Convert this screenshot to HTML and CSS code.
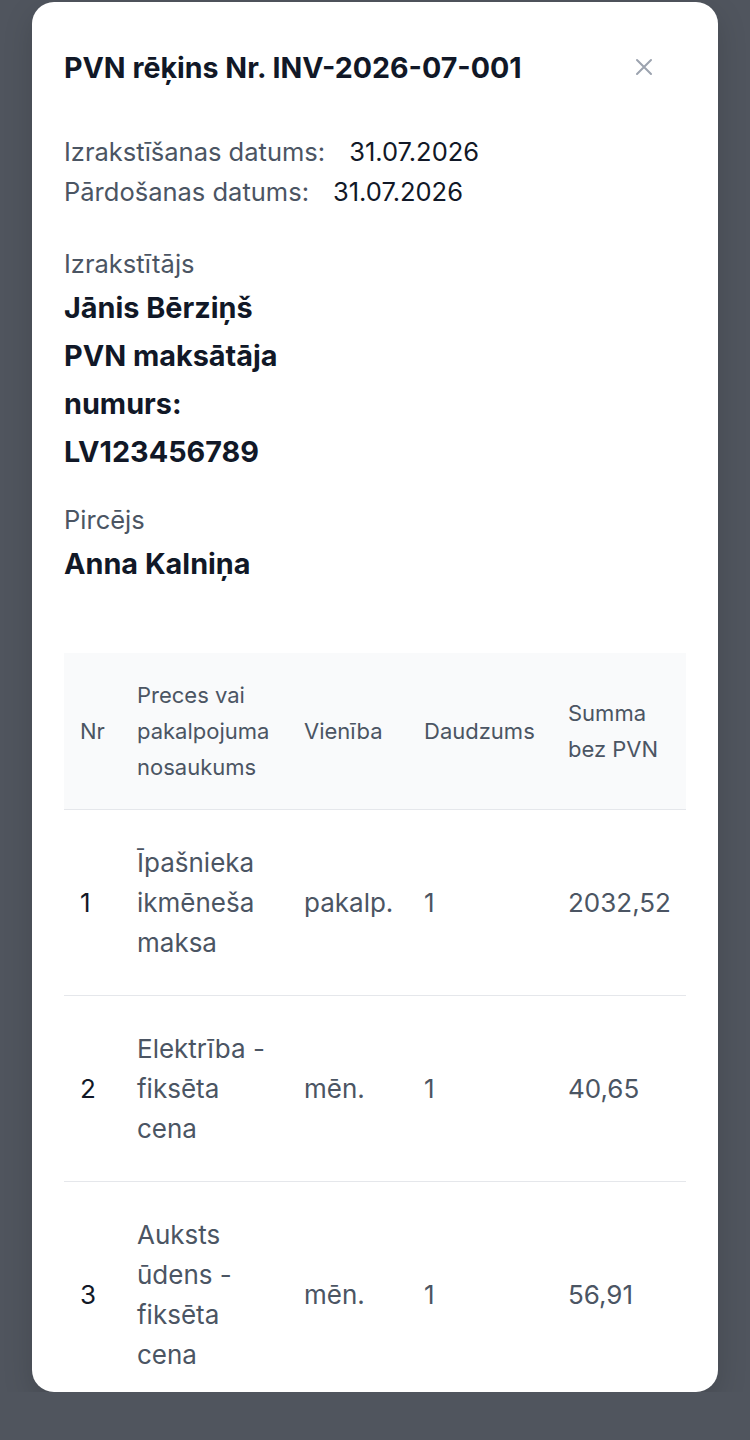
FILE: index.html
```html
<!DOCTYPE html>
<html lang="lv">
<head>
<meta charset="utf-8">
<title>PVN rēķins</title>
<link rel="stylesheet" href="styles.css">
</head>
<body>
<div class="modal">
  <div class="modal-header">
    <h1 class="title">PVN rēķins Nr. INV-2026-07-001</h1>
    <button class="close" aria-label="Aizvērt">
      <svg width="18" height="18" viewBox="0 0 18 18"><path d="M2 2L16 16M16 2L2 16" stroke="#9ca3af" stroke-width="2" stroke-linecap="round"/></svg>
    </button>
  </div>
  <div class="dates">
    <div class="date-row"><span class="label">Izrakstīšanas datums:</span><span class="value">31.07.2026</span></div>
    <div class="date-row"><span class="label">Pārdošanas datums:</span><span class="value">31.07.2026</span></div>
  </div>
  <div class="party seller">
    <div class="label">Izrakstītājs</div>
    <div class="party-info">
      <div>Jānis Bērziņš</div>
      <div>PVN maksātāja numurs: LV123456789</div>
    </div>
  </div>
  <div class="party buyer">
    <div class="label">Pircējs</div>
    <div class="party-info">
      <div>Anna Kalniņa</div>
    </div>
  </div>
  <table class="items">
    <colgroup>
      <col class="c-nr"><col class="c-name"><col class="c-unit"><col class="c-qty"><col class="c-sum">
    </colgroup>
    <thead>
      <tr><th>Nr</th><th>Preces vai pakalpojuma nosaukums</th><th>Vienība</th><th>Daudzums</th><th>Summa bez PVN</th></tr>
    </thead>
    <tbody>
      <tr><td class="nr">1</td><td>Īpašnieka ikmēneša maksa</td><td>pakalp.</td><td>1</td><td>2032,52</td></tr>
      <tr><td class="nr">2</td><td>Elektrība - fiksēta cena</td><td>mēn.</td><td>1</td><td>40,65</td></tr>
      <tr><td class="nr">3</td><td>Auksts ūdens - fiksēta cena</td><td>mēn.</td><td>1</td><td>56,91</td></tr>
    </tbody>
  </table>
</div>
</body>
</html>
```
FILE: styles.css
```css
* { box-sizing: border-box; }
html, body {
  margin: 0;
  padding: 0;
  background: #50555e;
  font-family: "Inter", "Liberation Sans", sans-serif;
  color: #111827;
}
body { padding-top: 2px; }
.modal {
  margin: 0 32px;
  height: 1390px;
  overflow: hidden;
  background: #ffffff;
  border-radius: 22px;
  padding: 0 32px;
  box-shadow: 0 10px 30px rgba(0,0,0,0.15);
}
.modal-header {
  height: 98px;
  padding-top: 32px;
  display: flex;
  align-items: center;
  justify-content: space-between;
}
.title {
  margin: 0;
  font-size: 28.6px;
  font-weight: 700;
  color: #111827;
}
.close {
  border: 0;
  background: transparent;
  padding: 0;
  width: 18px;
  height: 18px;
  margin-right: 33px;
  display: flex;
}
.dates {
  margin-top: 32px;
  font-size: 25.5px;
  line-height: 40px;
}
.date-row { display: flex; gap: 24px; }
.label { color: #4b5563; }
.value { color: #111827; }
.party { width: 300px; font-size: 25.5px; line-height: 40px; }
.seller { margin-top: 32px; }
.buyer { margin-top: 24px; }
.party-info {
  font-size: 28.8px;
  font-weight: 700;
  line-height: 48px;
  color: #111827;
}
.items {
  margin-top: 65px;
  width: 100%;
  border-collapse: collapse;
  table-layout: fixed;
}
.c-nr { width: 57px; }
.c-name { width: 167px; }
.c-unit { width: 120px; }
.c-qty { width: 144px; }
.c-sum { width: 134px; }
.items thead tr { background: #f9fafb; }
.items th {
  text-align: left;
  font-weight: 400;
  font-size: 22px;
  line-height: 36px;
  color: #4b5563;
  padding: 24px 8px 24px 16px;
  border-bottom: 1px solid #e5e7eb;
  vertical-align: middle;
}
.items td {
  font-size: 26px;
  line-height: 40px;
  color: #4b5563;
  padding: 33px 12px 32px 16px;
  border-bottom: 1px solid #e5e7eb;
  vertical-align: middle;
}
.items td:last-child { padding-right: 0; }
.items td.nr { color: #111827; }
```
